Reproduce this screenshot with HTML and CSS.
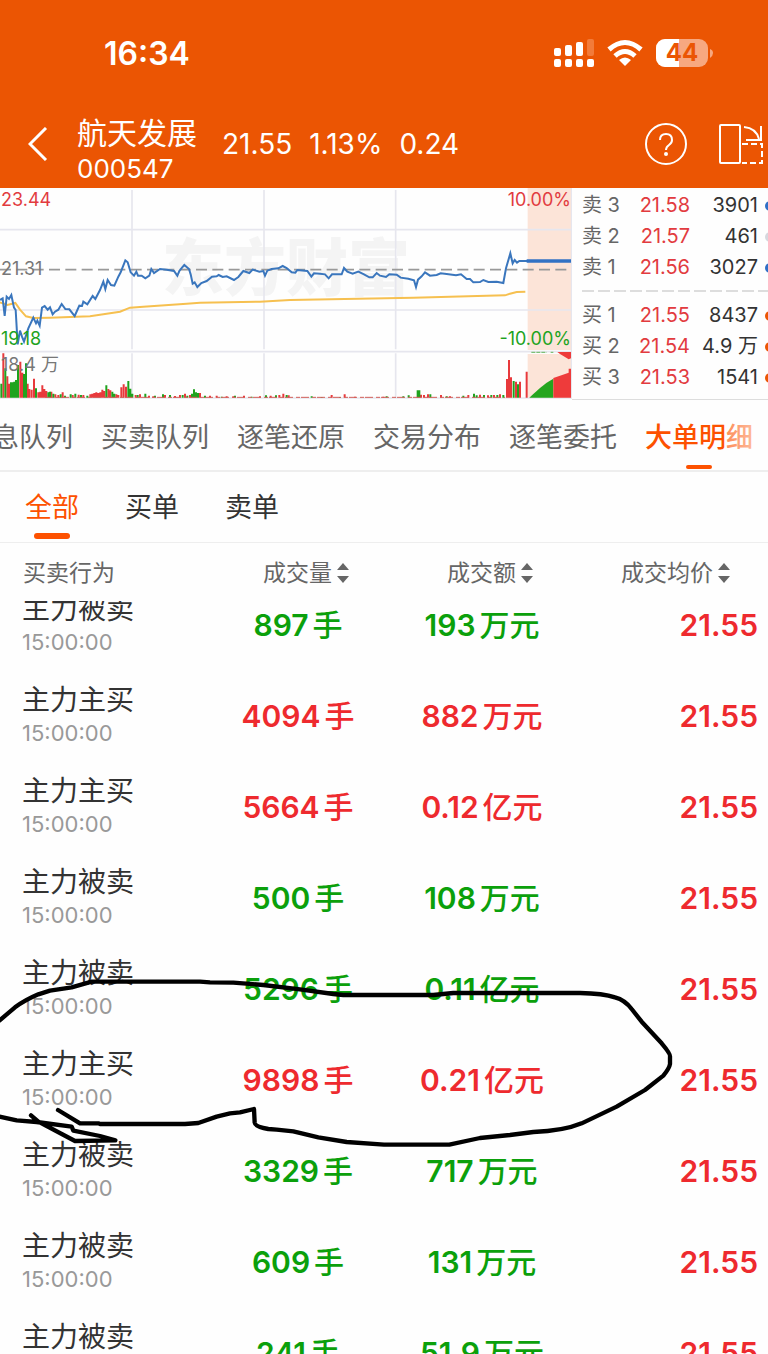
FILE: index.html
```html
<!DOCTYPE html>
<html lang="zh-CN">

<head>
    <meta charset="UTF-8">
    <meta name="viewport" content="width=device-width, initial-scale=1.0">
    <title>航天发展 000547</title>
    <link rel="stylesheet" href="styles.css">
</head>

<body>

    <!-- Header Section -->
    <header>
        <div class="status-bar">
            <span class="clock">16:34</span>
            <div class="status-icons">
                <svg class="signal" viewBox="0 0 40 28" aria-hidden="true">
                    <g fill="#fff">
                        <rect x="0" y="9" width="7" height="8" rx="2" />
                        <rect x="11" y="6" width="7" height="11" rx="2" />
                        <rect x="22" y="3" width="7" height="14" rx="2" />
                        <rect x="0" y="20" width="7" height="8" rx="2" />
                        <rect x="11" y="20" width="7" height="8" rx="2" />
                        <rect x="22" y="20" width="7" height="8" rx="2" />
                        <rect x="33" y="20" width="7" height="8" rx="2" />
                    </g>
                    <rect x="33" y="0" width="7" height="17" rx="2" fill="#f27b3a" />
                </svg>
                <svg class="wifi" viewBox="0 0 36 28" aria-hidden="true">
                    <g fill="none" stroke="#fff" stroke-width="5">
                        <path d="M2 10.500Q18 -3.500 34 10.500" />
                        <path d="M8 17Q18 8 28 17" />
                    </g>
                    <path d="M12 21Q18 16 24 21L18 27Z" fill="#fff" />
                </svg>
                <svg class="battery" viewBox="0 0 58 28" aria-hidden="true">
                    <rect width="52" height="28" rx="9" fill="#f7a880" />
                    <path d="M9 0H23V28H9A9 9 0 0 1 0 19V9A9 9 0 0 1 9 0Z" fill="#fff" />
                    <path d="M54 10Q57 11 57 14T54 19Z" fill="#f7a880" />
                    <text x="26" y="22" text-anchor="middle">44</text>
                </svg>
            </div>
        </div>
        <div class="title-bar">
            <button class="back" aria-label="返回">
                <svg viewBox="0 0 20 34"><path d="M18 1L2 17L18 33" /></svg>
            </button>
            <h1>航天发展<small>000547</small></h1>
            <p class="price"><span>21.55</span><span>1.13%</span><span>0.24</span></p>
            <button class="help" aria-label="帮助">
                <svg viewBox="0 0 42 42">
                    <circle cx="21" cy="21" r="20" />
                    <path d="M15 17Q15 11 21 11T27 17Q27 20 24 22T21 27" />
                    <circle class="dot" cx="21" cy="31" r="2" />
                </svg>
            </button>
            <button class="rotate" aria-label="横屏">
                <svg viewBox="0 0 46 42">
                    <rect x="2" y="2" width="20" height="38" rx="1" />
                    <path d="M26 4Q38 5 41 16M43 3V17H28" />
                    <path d="M24 21H44V40H24" stroke-dasharray="6 3" />
                </svg>
            </button>
        </div>
    </header>

    <!-- Minute chart and order book -->
    <section class="quote">
        <div class="chart">
            <span class="watermark">东方财富</span>
            <svg viewBox="0 9 1716 636" preserveAspectRatio="none" aria-hidden="true">
                <path class="band" d="M1583 9H1714V495H1583ZM1583 507H1714V638H1583Z" />
                <path class="grid" d="M396 15V493M792 15V493M1187 15V493M396 505V638M792 505V638M1187 505V638M0 134H1714M0 375H1714M0 500H1714M1715 9V638M0 639H1716" />
                <path class="middle" d="M0 254H1714" />
                <path class="average" d="M0 352L12 356 22 360 46 354 60 374 78 394 100 399 150 398 270 394 310 388 360 380 390 368 430 365 560 356 600 353 780 350 870 345 1240 338 1515 331 1530 326 1550 321 1576 320" />
                <path class="line" d="M0 345L8 340 14 393 20 335 27 342 34 330 42 368 47 375 53 478 60 437 66 455 72 470 85 430 100 398 108 415 112 407 119 422 126 368 134 363 143 374 150 367 158 388 165 380 175 374 185 357 196 372 208 373 224 393 238 362 246 363 250 350 262 358 278 333 286 342 300 315 310 290 316 312 323 285 333 300 343 302 355 275 362 262 376 226 383 232 392 262 402 272 409 260 414 272 425 272 436 280 448 272 454 252 462 264 480 252 500 254 522 258 532 272 538 258 546 248 553 240 567 252 572 268 578 296 584 292 592 306 604 294 620 288 636 275 650 274 656 270 668 276 680 274 702 285 715 276 730 258 748 264 758 254 778 260 790 258 795 272 802 257 815 252 835 250 848 243 860 249 875 262 886 263 892 255 922 258 934 275 942 265 960 266 975 268 986 280 996 268 1025 268 1032 249 1042 260 1058 266 1075 260 1092 268 1108 277 1118 277 1130 264 1140 272 1158 276 1168 268 1190 269 1202 278 1225 281 1242 286 1248 306 1254 284 1265 274 1275 262 1290 272 1310 270 1322 265 1340 267 1368 271 1383 268 1400 282 1410 282 1420 292 1440 291 1450 285 1465 291 1490 290 1510 294 1518 250 1531 205 1538 235 1544 225 1551 233 1558 228 1583 228" />
                <path class="auction" d="M1580 228H1713" />
                <!-- Volume -->
                <path class="bars up" d="M10 638V505M22 638V574M27 638V596M61 638V530M67 638V563M83 638V596M88 638V612M95 638V614M102 638V581M115 638V622M121 638V620M127 638V601M133 638V612M139 638V618M154 638V620M166 638V628M175 638V630M188 638V622M218 638V630M236 638V629M250 638V630M271 638V628M277 638V626M283 638V624M289 638V622M295 638V624M301 638V622M307 638V614M313 638V618M325 638V612M331 638V616M349 638V628M355 638V630M364 638V607M371 638V598M378 638V605M407 638V630M420 638V628M447 638V632M460 638V634M495 638V630M525 638V633M540 638V630M555 638V626M570 638V630M600 638V624M630 638V632M650 638V632M680 638V634M700 638V634M732 638V632M780 638V634M812 638V632M838 638V630M850 638V626M866 638V631M995 638V630M1034 638V628M1065 638V635M1150 638V635M1263 638V629M1272 638V630M1284 638V628M1323 638V630M1350 638V634M1405 638V630M1440 638V629M1464 638V631M1482 638V630M1500 638V628M1521 638V582M1527 638V525M1533 638V577M1548 638V590M1560 638V590M1580 638V560" />
                <path class="bars down" d="M4 638V596M16 638V550M33 638V592M38 638V592M43 638V590M48 638V585M54 638V540M72 638V567M78 638V535M108 638V610M145 638V622M150 638V620M160 638V626M182 638V628M195 638V632M212 638V628M226 638V626M243 638V630M262 638V632M319 638V601M337 638V620M343 638V626M385 638V588M391 638V611M397 638V626M413 638V630M436 638V626M465 638V632M489 638V628M510 638V630M548 638V630M562 638V632M576 638V626M582 638V613M588 638V622M594 638V624M615 638V632M665 638V635M705 638V632M755 638V635M798 638V631M828 638V631M860 638V630M935 638V634M965 638V636M1020 638V636M1160 638V634M1210 638V634M1226 638V631M1253 638V616M1258 638V616M1291 638V628M1340 638V634M1390 638V632M1422 638V626M1430 638V631M1452 638V630M1474 638V630M1492 638V630M1510 638V630M1541 638V588M1554 638V598" />
                <path class="floor" d="M135 637H1515" />
                <path class="fill-down" d="M1588 638L1600 627 1620 609 1640 593 1660 581V638Z" />
                <path class="fill-up" d="M1660 638V579L1680 572 1706 563V551H1713V638ZM1672 501H1713V520L1706 523 1690 513 1680 507Z" />
                <path class="auction-gap" d="M1594 502H1640M1652 502H1660" />
            </svg>
            <span class="mark top-left">23.44</span>
            <span class="mark mid-left">21.31</span>
            <span class="mark low-left">19.18</span>
            <span class="mark volume">18.4 万</span>
            <span class="mark top-right">10.00%</span>
            <span class="mark low-right">-10.00%</span>
        </div>
        <div class="book">
            <ul>
                <li class="sell"><span>卖 3</span><b>21.58</b><em>3901</em></li>
                <li class="none"><span>卖 2</span><b>21.57</b><em>461</em></li>
                <li class="sell"><span>卖 1</span><b>21.56</b><em>3027</em></li>
            </ul>
            <ul>
                <li class="buy"><span>买 1</span><b>21.55</b><em>8437</em></li>
                <li class="buy"><span>买 2</span><b>21.54</b><em>4.9 万</em></li>
                <li class="buy"><span>买 3</span><b>21.53</b><em>1541</em></li>
            </ul>
        </div>
    </section>

    <nav class="tabs">
        <a href="#queue">息队列</a>
        <a href="#orders">买卖队列</a>
        <a href="#ticks">逐笔还原</a>
        <a href="#spread">交易分布</a>
        <a href="#entrust">逐笔委托</a>
        <a href="#big" class="active">大单明细</a>
    </nav>

    <nav class="filters">
        <a href="#all" class="active">全部</a>
        <a href="#buy">买单</a>
        <a href="#sell">卖单</a>
    </nav>

    <!-- Big orders -->
    <table class="orders">
        <thead>
            <tr>
                <th>买卖行为</th>
                <th><button>成交量<i class="sort"></i></button></th>
                <th><button>成交额<i class="sort"></i></button></th>
                <th><button>成交均价<i class="sort"></i></button></th>
            </tr>
        </thead>
        <tbody>
            <tr class="green"><td>主力被卖<time>15:00:00</time></td><td>897<i>手</i></td><td>193<i>万元</i></td><td>21.55</td></tr>
            <tr><td>主力主买<time>15:00:00</time></td><td>4094<i>手</i></td><td>882<i>万元</i></td><td>21.55</td></tr>
            <tr><td>主力主买<time>15:00:00</time></td><td>5664<i>手</i></td><td>0.12<i>亿元</i></td><td>21.55</td></tr>
            <tr class="green"><td>主力被卖<time>15:00:00</time></td><td>500<i>手</i></td><td>108<i>万元</i></td><td>21.55</td></tr>
            <tr class="green"><td>主力被卖<time>15:00:00</time></td><td>5296<i>手</i></td><td>0.11<i>亿元</i></td><td>21.55</td></tr>
            <tr><td>主力主买<time>15:00:00</time></td><td>9898<i>手</i></td><td>0.21<i>亿元</i></td><td>21.55</td></tr>
            <tr class="green"><td>主力被卖<time>15:00:00</time></td><td>3329<i>手</i></td><td>717<i>万元</i></td><td>21.55</td></tr>
            <tr class="green"><td>主力被卖<time>15:00:00</time></td><td>609<i>手</i></td><td>131<i>万元</i></td><td>21.55</td></tr>
            <tr class="green"><td>主力被卖<time>15:00:00</time></td><td>241<i>手</i></td><td>51.9<i>万元</i></td><td>21.55</td></tr>
        </tbody>
    </table>

    <!-- Pen strokes over the list -->
    <svg class="pen" viewBox="0 0 2304 810" aria-hidden="true">
        <path d="M-10 248L0 240 45 202Q75 180 115 163L150 152 215 142 275 125H600L630 127 700 128 790 135 900 148 1000 162 1030 165H1300L1360 159H1740Q1810 160 1845 172 1875 180 1895 207L1925 245 1985 310Q2012 342 2010 350V372Q2008 385 1990 407L1935 450 1850 500 1745 550Q1690 573 1600 576L1530 585 1440 594 1348 614H1152L1040 606 955 592 880 574 830 569 805 567Q765 560 764 548L762 507 720 517 690 520 650 530 595 549 555 552H300L295 550H240L174 510" />
        <path d="M-10 528L50 541 110 546 215 560 220 572 300 588 346 601 225 603 115 545 93 526" />
    </svg>

</body>
</html>
```
FILE: styles.css
```css
/* General Reset */
* {
    margin: 0;
    padding: 0;
    box-sizing: border-box;
}

body {
    position: relative;
    display: flex;
    flex-direction: column;
    height: 100vh;
    overflow: hidden;
    font-family: Inter, "Noto Sans CJK SC", sans-serif;
    color: #333;
    background-color: #fefefe;
}

a {
    color: inherit;
    text-decoration: none;
}

button {
    font: inherit;
    color: inherit;
    background: none;
    border: none;
    cursor: pointer;
}

svg {
    display: block;
}

i, em {
    font-style: normal;
}

/* Header */
header {
    background-color: #eb5503;
    color: #fff;
}

.status-bar {
    display: flex;
    justify-content: space-between;
    align-items: center;
    height: 106px;
    padding: 0 54px 0 104px;
}

.clock {
    font-size: 32px;
    font-weight: 600;
}

.status-icons {
    display: flex;
    align-items: center;
    gap: 13px;
}

.signal {
    width: 40px;
    height: 28px;
}

.wifi {
    width: 36px;
    height: 28px;
}

.battery {
    width: 58px;
    height: 28px;
}

.battery text {
    font-size: 24px;
    font-weight: 700;
    fill: #eb5503;
}

.title-bar {
    display: flex;
    align-items: center;
    height: 82px;
    padding: 0 4px 6px 28px;
}

.title-bar svg {
    fill: none;
    stroke: #fff;
    stroke-width: 2;
}

.back {
    width: 49px;
}

.back svg {
    width: 20px;
    height: 34px;
    stroke-width: 3;
}

.title-bar h1 {
    padding-top: 11px;
    font-size: 30px;
    line-height: 38px;
    font-weight: 400;
}

.title-bar small {
    display: block;
    font-size: 26px;
    line-height: 34px;
}

.price {
    display: flex;
    flex: 1;
    gap: 17px;
    margin-left: 25px;
    font-size: 28px;
}

.help svg {
    width: 42px;
    height: 42px;
}

.help .dot {
    fill: #fff;
    stroke: none;
}

.rotate {
    margin-left: 31px;
}

.rotate svg {
    width: 46px;
    height: 42px;
}

/* Chart */
.quote {
    display: grid;
    grid-template-columns: 572fr 196fr;
    height: 212px;
}

.chart {
    position: relative;
}

.chart svg {
    position: relative;
    width: 100%;
    height: 212px;
    fill: none;
}

.chart .band {
    fill: #fce4d8;
}

.chart .grid {
    stroke: #e6e6ee;
    stroke-width: 5;
}

.chart .middle {
    stroke: #999;
    stroke-width: 5;
    stroke-dasharray: 33 16;
}

.chart .average {
    stroke: #f6c050;
    stroke-width: 6;
}

.chart .line {
    stroke: #3a76bd;
    stroke-width: 6;
}

.chart .auction {
    stroke: #3272c4;
    stroke-width: 10;
}

.chart .bars {
    stroke-width: 6;
}

.chart .up {
    stroke: #e8393c;
}

.chart .down {
    stroke: #1ea31e;
}

.chart .floor {
    stroke: #d2605a;
    stroke-width: 3;
    stroke-dasharray: 24 9 12 3;
}

.chart .fill-up {
    fill: #ee3b3b;
}

.chart .fill-down {
    fill: #25a51f;
}

.chart .auction-gap {
    stroke: #7dc078;
    stroke-width: 4;
    stroke-dasharray: 12 3;
}

.watermark {
    position: absolute;
    top: 36px;
    left: 162px;
    font-size: 62px;
    line-height: 90px;
    font-weight: 900;
    color: #f4f4f4;
}

.mark {
    position: absolute;
    font-size: 18px;
    line-height: 22px;
}

.top-left {
    top: 1px;
    left: 1px;
    color: #e23b3f;
}

.mid-left {
    top: 70px;
    left: 1px;
    color: #777;
}

.low-left {
    top: 140px;
    left: 1px;
    color: #1ea31e;
}

.volume {
    top: 166px;
    left: 1px;
    color: #777;
}

.top-right {
    top: 1px;
    right: 1px;
    color: #e23b3f;
}

.low-right {
    top: 140px;
    right: 1px;
    color: #1ea31e;
}

/* Order book */
.book {
    padding-top: 2px;
    overflow: hidden;
    border-bottom: 1px solid #ddd;
    font-size: 20px;
    line-height: 31px;
}

.book ul {
    list-style-type: none;
    padding-left: 10px;
}

.book ul + ul {
    margin-top: 7px;
    padding-top: 10px;
    background: repeating-linear-gradient(90deg, transparent 0 4px, #ddd 4px 16px) no-repeat 6px 0 / 100% 2px;
}

.book li {
    display: grid;
    grid-template-columns: 34px 74px 68px 10px;
    align-items: center;
    white-space: nowrap;
    color: #333;
}

.book li::after {
    content: "";
    width: 10px;
    height: 10px;
    margin-left: 7px;
    border-radius: 50%;
    background-color: #2f6fc6;
}

.book .none::after {
    background-color: #d6d8de;
}

.book .buy::after {
    background-color: #eb5503;
}

.book span {
    color: #666;
}

.book b {
    font-weight: 400;
    text-align: right;
    color: #e23b3f;
}

.book em {
    text-align: right;
}

/* Tabs */
.tabs {
    position: relative;
    display: flex;
    justify-content: flex-end;
    gap: 28px;
    height: 72px;
    padding-right: 15px;
    border-bottom: 2px solid #eee;
    font-size: 27px;
    line-height: 76px;
    white-space: nowrap;
    color: #666;
}

.tabs::after {
    content: "";
    position: absolute;
    top: 10px;
    right: 0;
    width: 42px;
    height: 50px;
    background: linear-gradient(90deg, rgba(254, 254, 254, 0.35), rgba(254, 254, 254, 0.75));
}

.tabs .active {
    position: relative;
    height: 70px;
    font-weight: 500;
    color: #fd5100;
}

.tabs .active::after {
    content: "";
    position: absolute;
    left: 50%;
    bottom: 1px;
    width: 26px;
    height: 4px;
    margin-left: -13px;
    border-radius: 2px;
    background-color: #fd5100;
}

.filters {
    display: flex;
    gap: 46px;
    height: 71px;
    padding-left: 25px;
    border-bottom: 1px solid #eee;
    font-size: 27px;
    line-height: 71px;
}

.filters .active {
    position: relative;
    color: #fd5100;
}

.filters .active::after {
    content: "";
    position: absolute;
    left: 50%;
    bottom: 3px;
    width: 36px;
    height: 6px;
    margin-left: -18px;
    border-radius: 3px;
    background-color: #fd5100;
}

/* Orders */
.orders {
    display: flex;
    flex: 1;
    flex-direction: column;
    min-height: 0;
}

.orders thead {
    display: block;
    padding-top: 2px;
}

.orders tbody {
    display: block;
    flex: 1;
    min-height: 0;
    overflow: hidden;
}

.orders tr {
    display: grid;
    grid-template-columns: 206fr 184fr 184fr 194fr;
    align-items: center;
}

.orders th {
    padding-left: 16px;
    font-size: 23px;
    line-height: 56px;
    font-weight: 400;
    color: #666;
}

.orders th:first-child {
    padding-left: 23px;
    text-align: left;
}

.orders th:last-child {
    padding-right: 38px;
    text-align: right;
}

.orders th button {
    display: inline-flex;
    align-items: center;
    gap: 5px;
}

.sort::before, .sort::after {
    content: "";
    display: block;
    border: 6px solid transparent;
}

.sort::before {
    border-top: none;
    border-bottom: 7px solid #666;
    margin-bottom: 6px;
}

.sort::after {
    border-bottom: none;
    border-top: 7px solid #666;
}

.orders tbody tr {
    height: 91px;
    color: #ee2a2e;
}

.orders tbody tr:first-child {
    margin-top: -22px;
}

.orders tbody .green {
    color: #0ba00b;
}

.orders td {
    font-size: 30px;
    line-height: 36px;
    font-weight: 600;
    text-align: center;
}

.orders td i {
    margin-left: 4px;
    font-size: 30px;
    font-weight: 500;
}

.orders td:first-child {
    padding-left: 22px;
    font-size: 28px;
    line-height: 34px;
    font-weight: 400;
    text-align: left;
    color: #333;
}

.orders td:last-child {
    padding-right: 10px;
    text-align: right;
    color: #ee2a2e;
}

.orders time {
    display: block;
    font-size: 22px;
    line-height: 32px;
    color: #999;
}

/* Pen */
.pen {
    position: absolute;
    top: 940px;
    left: 0;
    width: 100%;
    fill: none;
    stroke: #000;
    stroke-width: 13;
    stroke-linecap: round;
    stroke-linejoin: round;
    pointer-events: none;
}
```
